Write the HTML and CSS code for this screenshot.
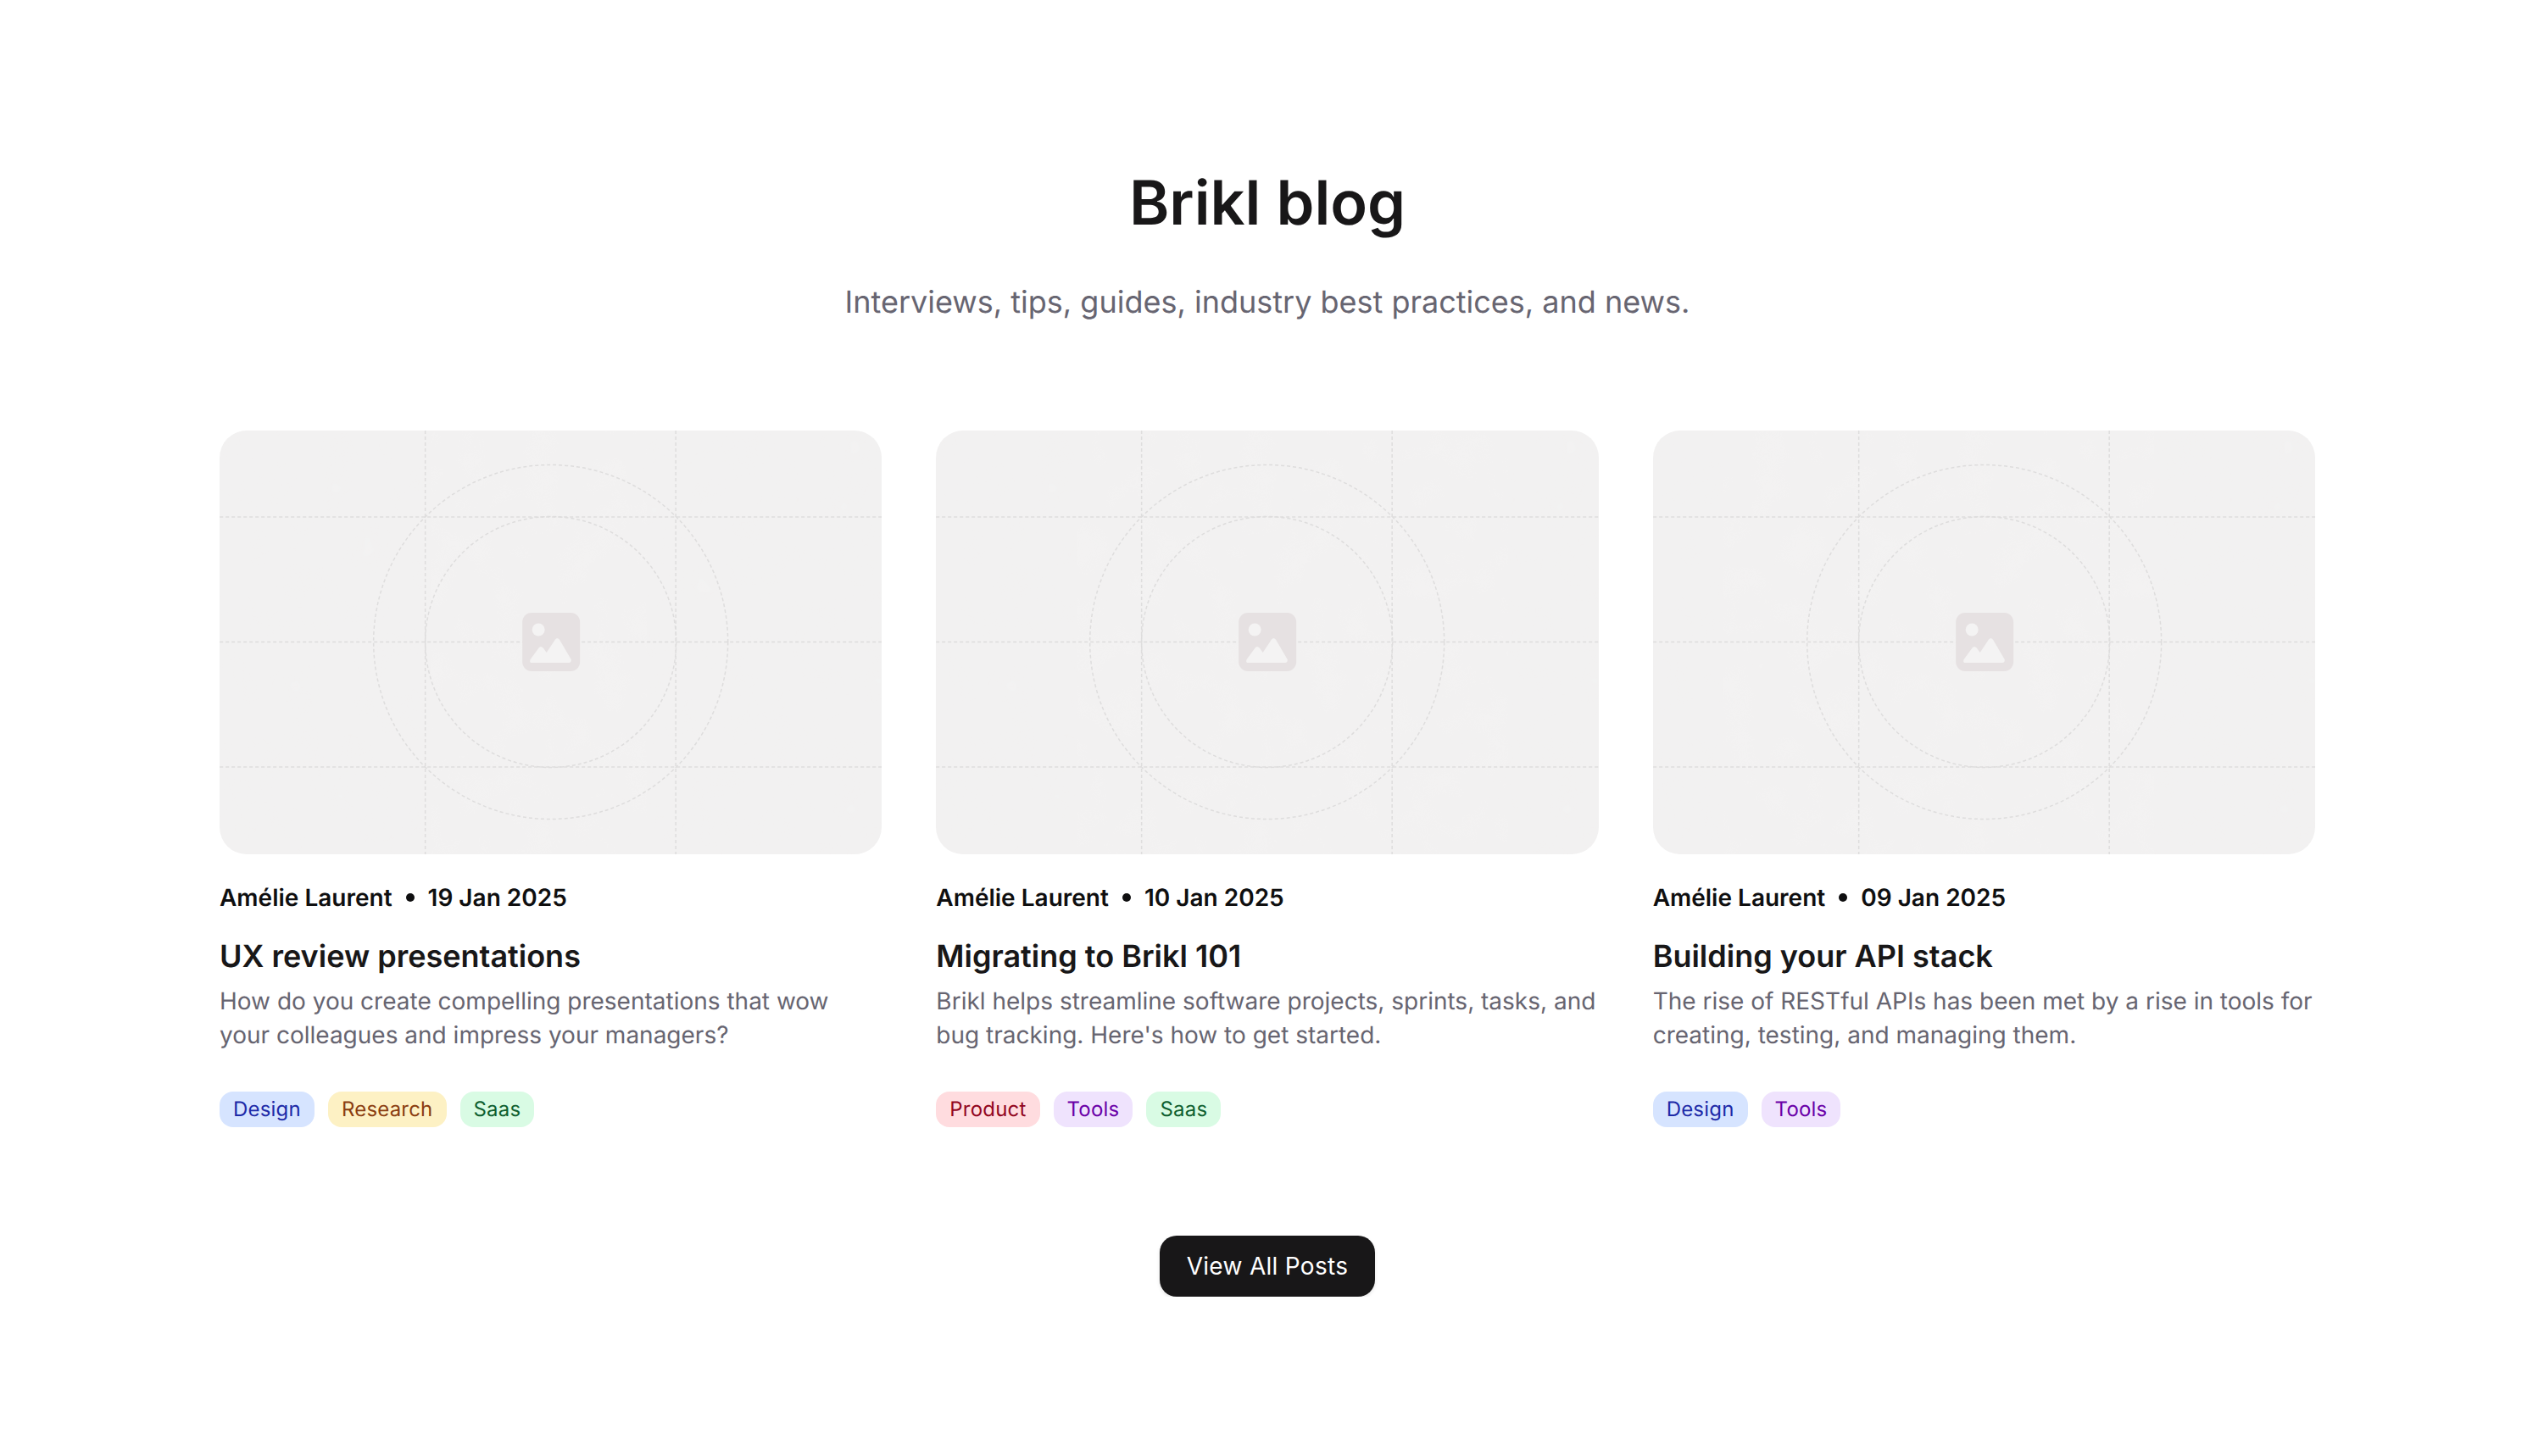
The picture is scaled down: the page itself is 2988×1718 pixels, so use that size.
FILE: index.html
```html
<!DOCTYPE html>
<html lang="en">
<head>
  <meta charset="UTF-8">
  <meta name="viewport" content="width=device-width, initial-scale=1.0">
  <title>Brikl blog</title>
  <link rel="stylesheet" href="styles.css">
</head>
<body>

  <section class="blog">
    <div class="blog-header">
      <h1>Brikl blog</h1>
      <p>Interviews, tips, guides, industry best practices, and news.</p>
    </div>

    <div class="post-grid">

      <!-- Post 1 -->
      <article class="post">
        <div class="post-image">
          <svg class="placeholder" viewBox="0 0 781 500" aria-hidden="true">
            <defs>
              <!-- faint mottling on the placeholder -->
              <filter id="mottle" x="0" y="0" width="100%" height="100%">
                <feTurbulence type="fractalNoise" baseFrequency="0.025" numOctaves="2" seed="4"/>
                <feColorMatrix values="0 0 0 0 1  0 0 0 0 0.99  0 0 0 0 0.98  1.6 0 0 0 -0.72"/>
              </filter>
            </defs>
            <rect class="noise" width="781" height="500"/>
            <g class="guides">
              <path d="M242.500 0V500M538 0V500M0 102H781M0 249.500H781M0 397H781"/>
              <circle cx="390.500" cy="249.500" r="148"/>
              <circle cx="390.500" cy="249.500" r="209"/>
            </g>
            <g transform="translate(357 215)">
              <rect class="icon-bg" width="68" height="69" rx="11"/>
              <circle class="icon-fg" cx="19" cy="20" r="7.500"/>
              <path class="icon-fg" d="M11 59H55C57 59 58 57 57.500 55L44 32C42.500 29.500 40 29.500 38.500 32L28.500 47L25 42C23 39.500 20.500 39.500 19 42L9.500 55C8.500 57 9 59 11 59Z"/>
            </g>
          </svg>
        </div>
        <p class="post-meta"><span>Amélie Laurent</span><i class="dot"></i><span>19 Jan 2025</span></p>
        <h2>UX review presentations</h2>
        <p class="post-text">How do you create compelling presentations that wow your colleagues and impress your managers?</p>
        <div class="tags">
          <span class="tag tag-blue">Design</span>
          <span class="tag tag-yellow">Research</span>
          <span class="tag tag-green">Saas</span>
        </div>
      </article>

      <!-- Post 2 -->
      <article class="post">
        <div class="post-image">
          <svg class="placeholder" viewBox="0 0 781 500" aria-hidden="true">
            <rect class="noise" width="781" height="500"/>
            <g class="guides">
              <path d="M242.500 0V500M538 0V500M0 102H781M0 249.500H781M0 397H781"/>
              <circle cx="390.500" cy="249.500" r="148"/>
              <circle cx="390.500" cy="249.500" r="209"/>
            </g>
            <g transform="translate(357 215)">
              <rect class="icon-bg" width="68" height="69" rx="11"/>
              <circle class="icon-fg" cx="19" cy="20" r="7.500"/>
              <path class="icon-fg" d="M11 59H55C57 59 58 57 57.500 55L44 32C42.500 29.500 40 29.500 38.500 32L28.500 47L25 42C23 39.500 20.500 39.500 19 42L9.500 55C8.500 57 9 59 11 59Z"/>
            </g>
          </svg>
        </div>
        <p class="post-meta"><span>Amélie Laurent</span><i class="dot"></i><span>10 Jan 2025</span></p>
        <h2>Migrating to Brikl 101</h2>
        <p class="post-text">Brikl helps streamline software projects, sprints, tasks, and bug tracking. Here's how to get started.</p>
        <div class="tags">
          <span class="tag tag-red">Product</span>
          <span class="tag tag-purple">Tools</span>
          <span class="tag tag-green">Saas</span>
        </div>
      </article>

      <!-- Post 3 -->
      <article class="post">
        <div class="post-image">
          <svg class="placeholder" viewBox="0 0 781 500" aria-hidden="true">
            <rect class="noise" width="781" height="500"/>
            <g class="guides">
              <path d="M242.500 0V500M538 0V500M0 102H781M0 249.500H781M0 397H781"/>
              <circle cx="390.500" cy="249.500" r="148"/>
              <circle cx="390.500" cy="249.500" r="209"/>
            </g>
            <g transform="translate(357 215)">
              <rect class="icon-bg" width="68" height="69" rx="11"/>
              <circle class="icon-fg" cx="19" cy="20" r="7.500"/>
              <path class="icon-fg" d="M11 59H55C57 59 58 57 57.500 55L44 32C42.500 29.500 40 29.500 38.500 32L28.500 47L25 42C23 39.500 20.500 39.500 19 42L9.500 55C8.500 57 9 59 11 59Z"/>
            </g>
          </svg>
        </div>
        <p class="post-meta"><span>Amélie Laurent</span><i class="dot"></i><span>09 Jan 2025</span></p>
        <h2>Building your API stack</h2>
        <p class="post-text">The rise of RESTful APIs has been met by a rise in tools for creating, testing, and managing them.</p>
        <div class="tags">
          <span class="tag tag-blue">Design</span>
          <span class="tag tag-purple">Tools</span>
        </div>
      </article>

    </div>

    <div class="blog-footer">
      <button class="view-all">View All Posts</button>
    </div>
  </section>

</body>
</html>
```

FILE: styles.css
```css
/* Basic page styling */
body {
  font-family: Inter, "Liberation Sans", sans-serif;
  background-color: #fff;
  margin: 0;
  text-rendering: geometricPrecision;
}

.blog {
  padding: 192px 257px 0 259px;
}

.blog-header {
  text-align: center;
  margin-bottom: 124px;
}

.blog-header h1 {
  color: #181718;
  font-size: 72px;
  font-weight: 600;
  line-height: 96px;
  margin: 0 0 40px;
}

.blog-header p {
  color: #676571;
  font-size: 36px;
  line-height: 56px;
  margin: 0;
}

.post-grid {
  display: grid;
  grid-template-columns: repeat(3, 1fr);
  gap: 64px;
}

.post-image {
  height: 500px;
  background-color: #f2f1f1;
  border-radius: 32px;
  overflow: hidden;
  margin-bottom: 31px;
}

.placeholder {
  display: block;
  width: 100%;
  height: 100%;
}

.noise {
  filter: url(#mottle);
  opacity: 0.12;
}

.guides {
  fill: none;
  stroke: #dedddd;
  stroke-width: 1.500;
  stroke-dasharray: 4 3;
}

.icon-bg {
  fill: #e6e1e2;
}

.icon-fg {
  fill: #f4f3f3;
}

.post-meta {
  display: flex;
  align-items: center;
  gap: 16px;
  color: #0f0f10;
  font-size: 28px;
  font-weight: 600;
  line-height: 40px;
  margin: 0 0 25px;
}

.dot {
  width: 10px;
  height: 10px;
  border-radius: 50%;
  background-color: #0f0f10;
}

.post h2 {
  color: #181718;
  font-size: 36px;
  font-weight: 600;
  line-height: 48px;
  margin: 0 0 9px;
}

.post-text {
  color: #676571;
  font-size: 28px;
  line-height: 40px;
  margin: 0 0 47px;
}

.tags {
  display: flex;
  gap: 16px;
}

.tag {
  font-size: 24px;
  line-height: 42px;
  letter-spacing: 0.2px;
  padding: 0 16px;
  border-radius: 16px;
}

.tag-blue { background-color: #d6e4ff; color: #1d2aa8; }
.tag-yellow { background-color: #fdf1c4; color: #8a3d10; }
.tag-green { background-color: #d9fbe4; color: #0f5f30; }
.tag-red { background-color: #ffdcdf; color: #92061e; }
.tag-purple { background-color: #efe3fd; color: #6a00a8; }

.blog-footer {
  display: flex;
  justify-content: center;
  margin-top: 128px;
}

.view-all {
  background-color: #181718;
  color: #fff;
  font-family: inherit;
  font-size: 28px;
  font-weight: 400;
  letter-spacing: 0.3px;
  width: 254px;
  height: 72px;
  border: none;
  border-radius: 20px;
  box-shadow: 0 2px 4px rgba(0, 0, 0, 0.1);
  cursor: pointer;
}
```
